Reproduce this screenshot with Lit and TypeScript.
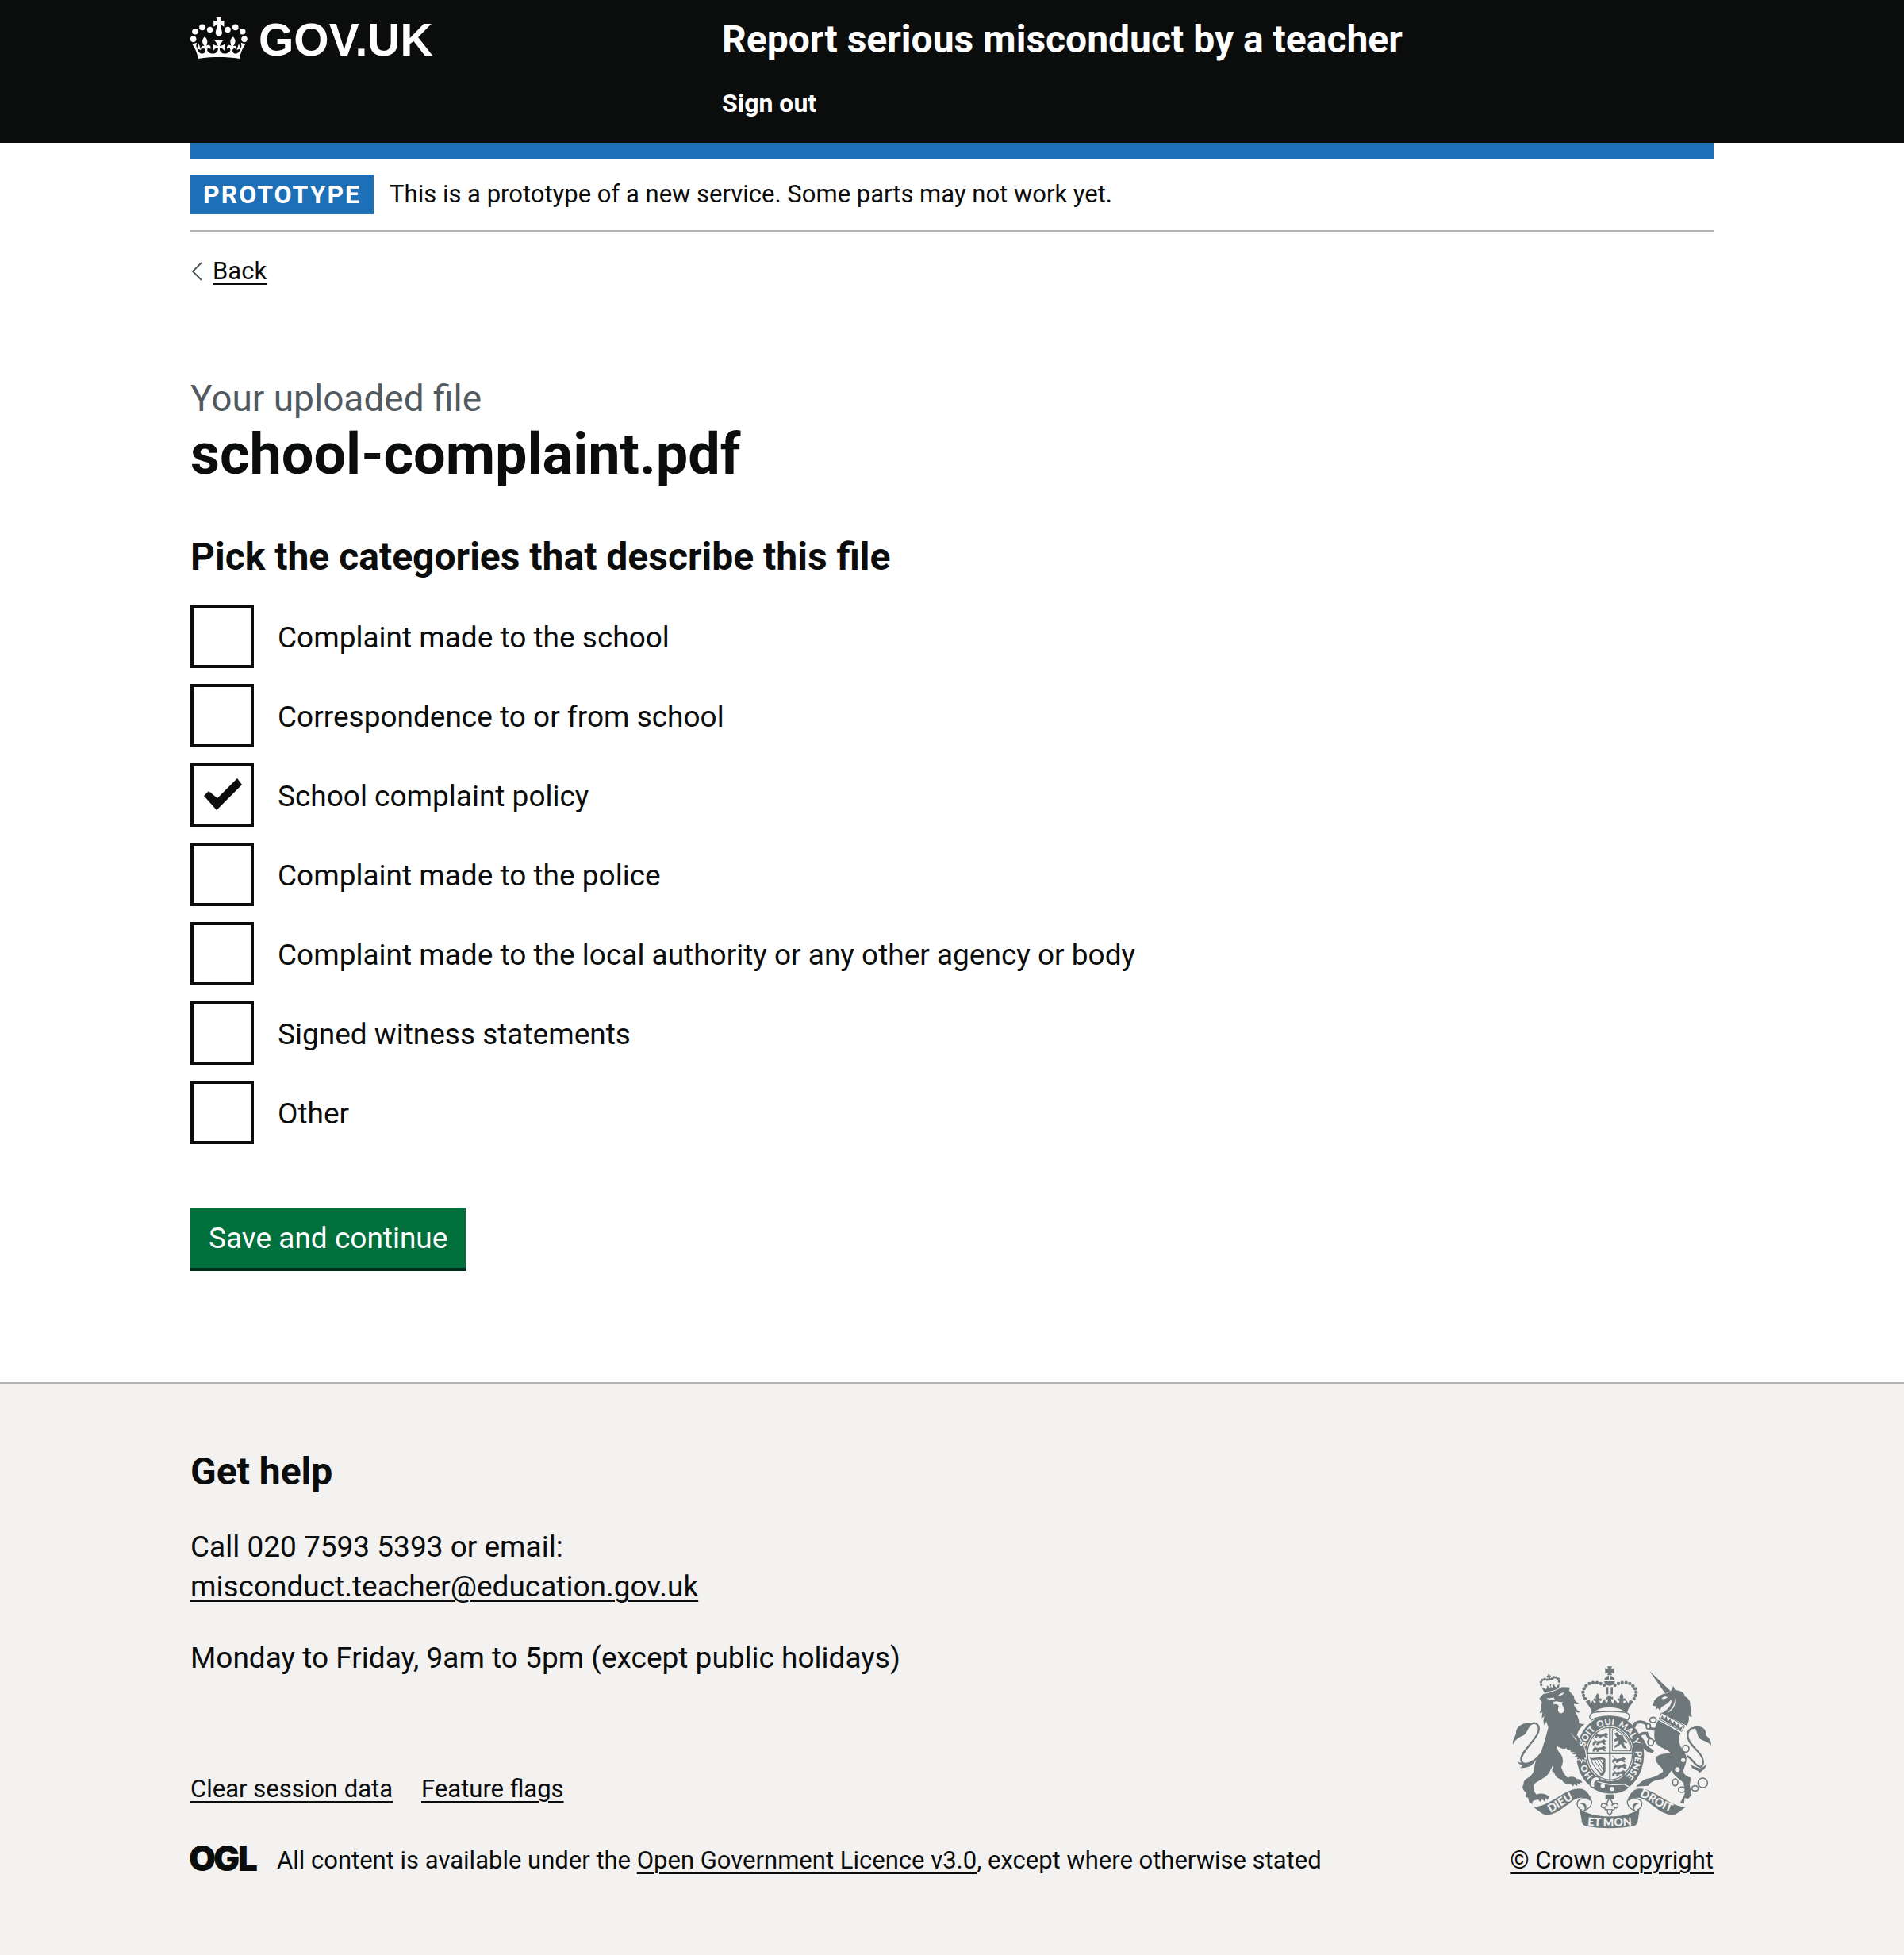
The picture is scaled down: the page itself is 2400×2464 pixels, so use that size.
import { LitElement, html, svg, css } from "lit";
import { customElement, state } from "lit/decorators.js";

interface Category {
  id: string;
  label: string;
  checked: boolean;
}

const crownHalf = svg`
  <path d="M167 216C195 216 222 218 246 222C251 198 259 180 269 167L252 161C254 170 255 175 252 181C249 178 246 173 244 165L236 190C242 187 246 185 251 184C245 200 236 205 229 203C222 201 219 195 220 189C222 182 230 180 234 189C240 175 228 170 222 175C233 163 234 151 222 139C209 150 210 160 216 175C209 166 195 171 200 186C206 177 213 183 212 191C210 198 200 204 189 203C172 201 171 190 171 180C175 180 183 183 189 192L191 166C184 172 178 174 171 174C174 166 184 153 184 153H167Z"/>
  <circle cx="202" cy="112" r="11"/><circle cx="231" cy="103" r="11.5"/><circle cx="258" cy="119" r="11.5"/><circle cx="265" cy="148" r="11.5"/>`;

const crown = svg`
  <path d="M157 63H179L174 80L175 81L188 77V101L175 93L174 95L180 120A12.500 13 0 1 1 156 120L162 95L161 93L148 101V77L161 81L162 80Z"/>
  <g>${crownHalf}</g>
  <g transform="translate(336 0) scale(-1 1)">${crownHalf}</g>`;

const beads = [
  [417, 130], [404, 124], [390, 120], [375, 120], [361, 124], [349, 132], [341, 143], [337, 156], [339, 169], [345, 181],
];

const crestCrownHalf = svg`
  ${beads.map(([x, y]) => svg`<circle cx=${x} cy=${y} r="6.500"/>`)}
  <path d="M438 206V214C412 214 390 219 372 238C368 218 358 205 347 192L362 184L366 200L373 187L381 199C386 199 386 193 384 188C378 192 374 187 378 181C382 178 386 180 388 184C382 174 386 168 392 161C399 168 402 174 397 184C400 178 406 178 408 183C408 189 403 191 400 188C399 194 402 199 406 199L420 181L424 201L431 190V182L424 186V173L432 176L428 168H438Z"/>
  <path d="M425 137H433V164H425Z"/>`;

const crestMain = svg`
  <path d="M429 59H447L443 70L455 65V86L443 81L447 92H429L433 81L421 86V65L433 70Z"/>
  <path d="M435 94V109H418C419 101 426 95 435 94ZM440 94V109H457C456 101 449 95 440 94ZM417 115H458C457 125 448 132 438 132C428 132 418 125 417 115Z"/>
  <g>${crestCrownHalf}</g>
  <g transform="translate(875 0) scale(-1 1)">${crestCrownHalf}</g>`;

const ribbonSide = svg`
  <path d="M150 591C190 591 228 560 266 539C305 516 338 515 354 536C362 546 368 556 370 568C362 560 350 556 338 556C315 552 298 566 276 584C248 606 222 621 200 620C180 618 168 602 150 591Z"/>
  <path d="M370 566C372 586 358 600 340 604M368 566C350 554 318 556 315 576C314 590 324 600 334 602" fill="none" stroke="currentColor" stroke-width="4"/>
  <path d="M342 604C347 592 339 580 326 578C334 572 345 575 349 584C353 594 349 602 342 604Z"/>`;

const lion = svg`
  <g transform="rotate(-11 213 125)">
    <path d="M186 156C184 146 181 138 178 131L190 136L193 143L199 136V128L206 134L208 142L213 136L210 126H217L214 136L219 142L221 134L228 128V136L234 143L237 136L249 131C245 138 242 146 241 156C224 151 203 151 186 156Z"/>
    ${[[179, 122], [180, 112], [187, 105], [196, 103], [205, 107], [222, 107], [231, 103], [240, 105], [247, 112], [248, 122]].map(
      ([x, y]) => svg`<circle cx=${x} cy=${y} r="5"/>`,
    )}
    <path d="M210 88H217L216 93L221 92V99L216 98L219 111H208L211 98L206 99V92L211 93Z"/>
  </g>
  <path d="M187 163C210 160 235 152 258 137L287 138L285 152C294 160 299 167 303 172C303 184 310 194 323 200C314 203 308 202 302 200C305 214 315 226 328 232C318 235 312 233 307 229C316 245 323 258 322 274L343 278C330 286 320 300 314 318C330 340 344 360 347 390L349 406L343 402L344 416L335 408L332 418L326 406L314 412L318 400L304 402L313 392L296 390L306 382C294 386 286 380 290 372C281 378 276 376 276 368C262 374 250 366 240 361C239 372 243 378 249 386C264 402 264 421 255 440C260 454 265 468 280 480C292 473 306 475 314 485C324 483 335 490 333 500L325 497L328 507L315 500L316 512L303 504L300 513L291 504C276 506 262 500 257 487C242 484 232 474 228 460L220 455L224 430C216 446 212 460 198 474L157 500C146 514 148 530 162 543C178 536 198 540 209 551L203 564L196 556L193 570L182 560L177 572L167 562C158 564 150 566 146 570L147 579L133 572L130 556L120 552L122 536C110 528 105 516 112 505C112 494 116 488 126 482C138 474 148 466 152 450C154 424 162 402 178 384C190 350 198 320 206 290L198 266L193 283C185 270 188 258 191 246L181 256L184 232L173 236C180 222 178 208 182 194L172 180Z" stroke="#f3f2f1" stroke-width="6" paint-order="stroke"/>
  <g fill="#f3f2f1">
    <path d="M199 178C208 186 218 190 230 183L226 176C216 180 208 180 199 178ZM244 168C252 172 262 166 267 156C258 160 250 160 244 168Z"/>
    <path d="M224 194C233 190 240 190 247 193L261 194C257 199 257 203 262 210C270 222 264 236 254 236C244 236 239 222 246 210C243 203 235 199 226 203Z"/>
    <path d="M287 305L316 340L310 338Z"/>
  </g>
  <path d="M136 279C162 262 180 286 164 316C146 350 104 382 103 410C106 440 148 426 176 392" fill="none" stroke="currentColor" stroke-width="7"/>
  <path d="M145 276C112 266 82 288 84 312C79 328 70 336 72 354C82 334 94 328 108 321C128 314 126 290 145 276Z"/>
  <path d="M88 417C100 427 110 418 124 428C138 428 150 416 160 406C152 432 132 444 98 443C106 438 108 434 104 430C98 430 92 425 88 417Z"/>`;

const unicorn = svg`
  <path d="M588 75L668 152L648 161Z"/>
  <path d="M601 207L607 187C620 174 634 162 655 160L670 150L679 133L686 149C706 148 722 160 722 172C738 180 746 194 742 206C750 220 745 234 749 251L737 246C740 262 734 274 730 283L634 236C654 226 676 204 671 184C660 196 646 208 634 212L628 226L621 216L613 222L616 210Z"/>
  <path d="M683 176C688 196 676 218 656 234C672 230 694 206 683 176Z" fill="#f3f2f1"/>
  <path d="M634 180C640 172 650 170 658 176C650 182 642 184 634 180Z" fill="#f3f2f1"/>
  <path d="M634 234L722 284L710 305L625 258Z" fill="#f3f2f1" stroke="currentColor" stroke-width="3"/>
  <path d="M630 256L638 243L643 258L653 246L658 266L668 257L673 275L684 265L688 283L699 275L703 291L714 287L708 301Z"/>
  <path d="M622 262L706 311C692 340 704 360 721 384C738 410 722 432 718 448C712 466 732 476 745 480L741 508L748 545L735 560L722 556L719 578L704 576C712 562 718 548 722 540L718 500C702 484 676 472 674 452C660 462 662 476 640 484C620 488 606 490 594 498L584 510L538 513C548 502 562 490 576 484C600 480 624 470 640 456C640 440 616 432 611 410C612 392 640 388 668 388C664 372 626 370 612 346C602 326 606 284 622 262Z"/>
  <path d="M612 296C590 298 582 290 580 278C564 266 552 266 540 272C532 272 530 282 536 288M608 344C588 334 580 320 578 312C562 310 550 316 552 324L568 348C570 362 582 370 600 380" fill="none" stroke="currentColor" stroke-width="11"/>
  <path d="M560 352L576 356L606 378L600 386L580 382L564 366Z"/>
  <path d="M764 292C734 288 724 318 742 346C764 378 798 396 790 430C786 444 770 440 754 418C744 406 736 400 730 396" fill="none" stroke="currentColor" stroke-width="7"/>
  <path d="M756 287C788 280 806 300 802 320C812 328 824 340 821 358C812 344 798 342 786 336C766 330 774 306 756 287Z"/>
  <path d="M744 428C756 440 764 438 776 444C788 444 796 436 806 428C800 446 792 452 776 462C776 454 770 452 762 450C752 448 746 440 744 428Z"/>
  <g fill="#f3f2f1" stroke="currentColor" stroke-width="5">
    <ellipse cx="602" cy="261" rx="12" ry="10"/><ellipse cx="584" cy="285" rx="8" ry="10"/>
    <ellipse cx="593" cy="345" rx="11" ry="13"/><ellipse cx="726" cy="370" rx="12" ry="13"/>
    <ellipse cx="686" cy="497" rx="10" ry="13"/><ellipse cx="711" cy="525" rx="13" ry="10"/>
    <ellipse cx="761" cy="520" rx="12" ry="10"/><circle cx="790" cy="499" r="18"/>
  </g>
  <g fill="#f3f2f1"><circle cx="716" cy="413" r="8"/><circle cx="694" cy="449" r="9"/></g>`;

/** One of the small walking lions on the shield. */
const passant = svg`
  <path d="M2 10L10 4L16 8L34 5L42 0L50 6L44 11L48 19L40 17L36 12L26 14L22 20L14 20L18 13L9 13L6 20L0 19ZM10 4C2 0 6-4 0-4" stroke="currentColor" stroke-width="2"/>`;

const garter = svg`
  <ellipse cx="440" cy="392" rx="128" ry="148"/>
  <ellipse cx="439" cy="389" rx="90" ry="104" fill="#f3f2f1"/>
  <ellipse cx="439" cy="389" rx="85" ry="99" fill="none" stroke="currentColor" stroke-width="4"/>
  <path d="M436 288H442V492H436ZM352 384H526V391H352Z"/>
  <g transform="translate(382 310)">${passant}</g>
  <g transform="translate(374 335)">${passant}</g>
  <g transform="translate(374 360)">${passant}</g>
  <g transform="translate(448 402)">${passant}</g>
  <g transform="translate(452 427)">${passant}</g>
  <g transform="translate(448 452)">${passant}</g>
  <path d="M448 296V378H518C516 340 492 306 448 296Z" fill="none" stroke="currentColor" stroke-width="3"/>
  <path d="M456 312L466 308L474 318L488 320L494 336L506 346L500 350L490 344L494 358L504 370L490 368L480 352L470 360L456 368L458 358L470 350L472 338L458 344L454 336L466 328Z"/>
  <path d="M363 402C376 412 400 396 422 408V454C418 470 410 476 404 472C396 454 370 436 363 402ZM370 412C378 440 398 452 406 462L414 452V414C398 406 386 416 370 412Z" fill-rule="evenodd"/>
  <path d="M380 414L408 456M390 412L412 446M400 410L414 432" fill="none" stroke="currentColor" stroke-width="3"/>
  <path d="M363 252C361 240 372 232 384 232C420 228 456 228 492 232C504 232 514 240 512 252L506 262C470 242 404 242 369 262Z" fill="#f3f2f1" stroke="currentColor" stroke-width="4"/>
  <path d="M372 482C400 502 448 510 492 504L514 516C480 552 400 550 362 512Z" stroke="#f3f2f1" stroke-width="4"/>
  <path d="M370 484C386 466 406 480 400 492C386 488 376 500 384 514C368 522 358 510 370 484Z" fill="#f3f2f1" stroke="currentColor" stroke-width="5"/>
  <circle cx="412" cy="511" r="8" fill="#f3f2f1"/><circle cx="447" cy="522" r="8" fill="#f3f2f1"/>
  <path d="M422 543H456V562H422Z"/>
  <path d="M438 558C450 570 450 578 446 586C454 574 468 574 470 586C468 596 460 596 456 592C458 600 452 604 446 604V612L438 622L430 612V604C424 604 418 600 420 592C416 596 408 596 406 586C408 574 422 574 430 586C426 578 426 570 438 558Z" fill="#f3f2f1" stroke="currentColor" stroke-width="4"/>
  <path d="M426 600H450" fill="none" stroke="currentColor" stroke-width="3"/>`;

const motto = svg`
  <path id="garter-line" d="M439 500A96 110 0 0 1 439 280A96 110 0 0 1 439 500" fill="none"/>
  <path id="dieu-line" d="M212 613C240 602 268 574 326 550" fill="none"/>
  <path id="mon-line" d="M340 659Q438 668 536 659" fill="none"/>
  <path id="droit-line" d="M548 549C590 562 630 604 690 614" fill="none"/>
  <g class="motto">
    <text><textPath href="#garter-line" startOffset="70">HO</textPath></text>
    <text><textPath href="#garter-line" startOffset="188">SOIT</textPath></text>
    <text><textPath href="#garter-line" startOffset="276">QUI</textPath></text>
    <text><textPath href="#garter-line" startOffset="354">MAL</textPath></text>
    <text><textPath href="#garter-line" startOffset="430">Y</textPath></text>
    <text><textPath href="#garter-line" startOffset="474">PENSE</textPath></text>
    <text class="scroll"><textPath href="#dieu-line" startOffset="2">DIEU</textPath></text>
    <text class="scroll"><textPath href="#mon-line" startOffset="50%" text-anchor="middle">ET MON</textPath></text>
    <text class="scroll"><textPath href="#droit-line" startOffset="2">DROIT</textPath></text>
  </g>`;

@customElement("app-root")
export class AppRoot extends LitElement {
  @state() private categories: Category[] = [
    { id: "school", label: "Complaint made to the school", checked: false },
    { id: "correspondence", label: "Correspondence to or from school", checked: false },
    { id: "policy", label: "School complaint policy", checked: true },
    { id: "police", label: "Complaint made to the police", checked: false },
    { id: "authority", label: "Complaint made to the local authority or any other agency or body", checked: false },
    { id: "witness", label: "Signed witness statements", checked: false },
    { id: "other", label: "Other", checked: false },
  ];

  static styles = css`
    :host {
      display: block;
      min-height: 100vh;
      background: #f3f2f1;
      color: #0b0c0c;
      font-family: Roboto, "Liberation Sans", sans-serif;
      font-size: 37px;
      line-height: 50px;
    }
    * { box-sizing: border-box; }
    h1, h2, p, fieldset, legend { margin: 0; padding: 0; border: 0; }
    svg { display: block; overflow: visible; }
    a {
      color: inherit;
      text-decoration-thickness: 2px;
      text-underline-offset: 5px;
    }
    .container { max-width: 1920px; margin: 0 auto; }
    .small { font-size: 31px; line-height: 40px; }

    .header { background: #0b0c0c; color: #fff; }
    .header-row {
      display: grid;
      grid-template-columns: 670px 1fr;
      padding: 20px 0 30px;
    }
    .logo {
      display: flex;
      align-items: flex-start;
      align-self: start;
      gap: 14px;
      font: 700 57px/60px "Liberation Sans", sans-serif;
      text-decoration: none;
    }
    .logo svg { width: 72px; height: 55px; fill: #fff; }
    .header-nav { display: grid; gap: 30px; justify-items: start; }
    .header-nav a { text-decoration: none; font-weight: 700; }
    .service { font-size: 48px; line-height: 60px; }
    .sign-out { font-size: 32px; line-height: 40px; }

    .page { background: #fff; padding-bottom: 140px; }
    .bar { height: 20px; background: #1d70b8; }
    .phase {
      display: flex;
      align-items: center;
      gap: 20px;
      padding: 20px 0;
      border-bottom: 2px solid #b1b4b6;
    }
    .tag {
      padding: 5px 16px;
      background: #1d70b8;
      color: #fff;
      font-size: 32px;
      font-weight: 700;
      line-height: 40px;
      letter-spacing: 2px;
    }
    .back {
      display: inline-flex;
      align-items: center;
      gap: 12px;
      margin-top: 30px;
      vertical-align: top;
    }
    .back svg { width: 16px; height: 24px; fill: none; stroke: #505a5f; stroke-width: 2; }

    .main { padding-top: 110px; }
    .caption { display: block; color: #505a5f; font-size: 46px; font-weight: 400; line-height: 60px; }
    .title { font-size: 72px; line-height: 82px; }
    .heading { font-size: 48px; font-weight: 700; line-height: 60px; }
    .categories { display: grid; gap: 20px; margin-top: 58px; }
    .categories legend { margin-bottom: 30px; }
    .category { display: flex; align-items: center; }
    .box { display: grid; flex: none; }
    .box input {
      grid-area: 1 / 1;
      appearance: none;
      width: 80px;
      height: 80px;
      margin: 0;
      border: 4px solid #0b0c0c;
      background: #fff;
    }
    .box svg { grid-area: 1 / 1; width: 80px; height: 80px; pointer-events: none; visibility: hidden; }
    .box input:checked + svg { visibility: visible; }
    .category label { padding: 3px 0 0 30px; }
    .save {
      display: block;
      margin-top: 80px;
      padding: 14px 23px 12px;
      border: 0;
      border-bottom: 4px solid #002d18;
      background: #00703c;
      color: #fff;
      font: inherit;
    }

    .footer { border-top: 2px solid #b1b4b6; }
    .footer-row {
      display: flex;
      justify-content: space-between;
      align-items: flex-end;
      gap: 60px;
      padding: 81px 0 99px;
    }
    .help { display: grid; gap: 40px; }
    .links { display: flex; gap: 36px; margin-top: 120px; }
    .licence { display: flex; align-items: flex-start; gap: 26px; margin-top: 50px; }
    .ogl { flex: none; width: 83px; height: 36px; fill: #0b0c0c; font: 900 44px Inter, "Liberation Sans", sans-serif; }
    .copyright { display: grid; justify-items: center; gap: 21px; }
    .crest { width: 250px; height: 204px; color: #6e787b; fill: currentColor; }
    .motto { fill: #f3f2f1; font: 900 34px Lato, "Liberation Sans", sans-serif; }
    .scroll { font-size: 43px; }
  `;

  private toggle(id: string) {
    this.categories = this.categories.map((c) => (c.id === id ? { ...c, checked: !c.checked } : c));
  }

  render() {
    return html`
      <header class="header">
        <div class="container header-row">
          <a class="logo" href="#"><svg viewBox="60 60 217 165" aria-hidden="true">${crown}</svg><span>GOV.UK</span></a>
          <nav class="header-nav">
            <a class="service" href="#">Report serious misconduct by a teacher</a>
            <a class="sign-out" href="#">Sign out</a>
          </nav>
        </div>
      </header>

      <div class="page">
        <div class="container">
          <div class="bar"></div>
          <div class="phase small">
            <strong class="tag">PROTOTYPE</strong>
            <span>This is a prototype of a new service. Some parts may not work yet.</span>
          </div>
          <a class="back small" href="#"
            ><svg viewBox="0 0 16 24" aria-hidden="true"><path d="M14 1L3 12L14 23" /></svg><span>Back</span></a
          >
          <main class="main">
            <h1 class="title"><span class="caption">Your uploaded file</span>school-complaint.pdf</h1>
            <form @submit=${(e: Event) => e.preventDefault()}>
              <fieldset class="categories">
                <legend class="heading">Pick the categories that describe this file</legend>
                ${this.categories.map(
                  (c) => html`
                    <div class="category">
                      <span class="box">
                        <input type="checkbox" id=${c.id} .checked=${c.checked} @change=${() => this.toggle(c.id)} />
                        <svg viewBox="0 0 80 80" aria-hidden="true">
                          <path d="M17 41L23 35L34 44L59 19L65 27L33 59Z" fill="#0b0c0c" />
                        </svg>
                      </span>
                      <label for=${c.id}>${c.label}</label>
                    </div>
                  `,
                )}
              </fieldset>
              <button class="save" type="submit">Save and continue</button>
            </form>
          </main>
        </div>
      </div>

      <footer class="footer">
        <div class="container footer-row">
          <div>
            <div class="help">
              <h2 class="heading">Get help</h2>
              <p>Call 020 7593 5393 or email:<br /><a href="mailto:misconduct.teacher@education.gov.uk">misconduct.teacher@education.gov.uk</a></p>
              <p>Monday to Friday, 9am to 5pm (except public holidays)</p>
            </div>
            <div class="links small">
              <a href="#">Clear session data</a>
              <a href="#">Feature flags</a>
            </div>
            <div class="licence small">
              <svg class="ogl" viewBox="0 0 83 36" aria-hidden="true"><text x="-2 29 60" y="33">OGL</text></svg>
              <span>All content is available under the <a href="#">Open Government Licence v3.0</a>, except where otherwise stated</span>
            </div>
          </div>
          <a class="copyright small" href="#">
            <svg class="crest" viewBox="72 58 750 612" aria-hidden="true">
              ${crestMain}${garter}${lion}${unicorn}
              <g>${ribbonSide}</g>
              <g transform="translate(875 0) scale(-1 1)">${ribbonSide}</g>
              <path d="M325 598C380 636 496 636 550 598C550 616 546 630 544 648Q540 660 525 663Q438 678 350 663Q335 660 332 646C332 630 326 616 325 598Z" />
              ${motto}
            </svg>
            <span>© Crown copyright</span>
          </a>
        </div>
      </footer>
    `;
  }
}
